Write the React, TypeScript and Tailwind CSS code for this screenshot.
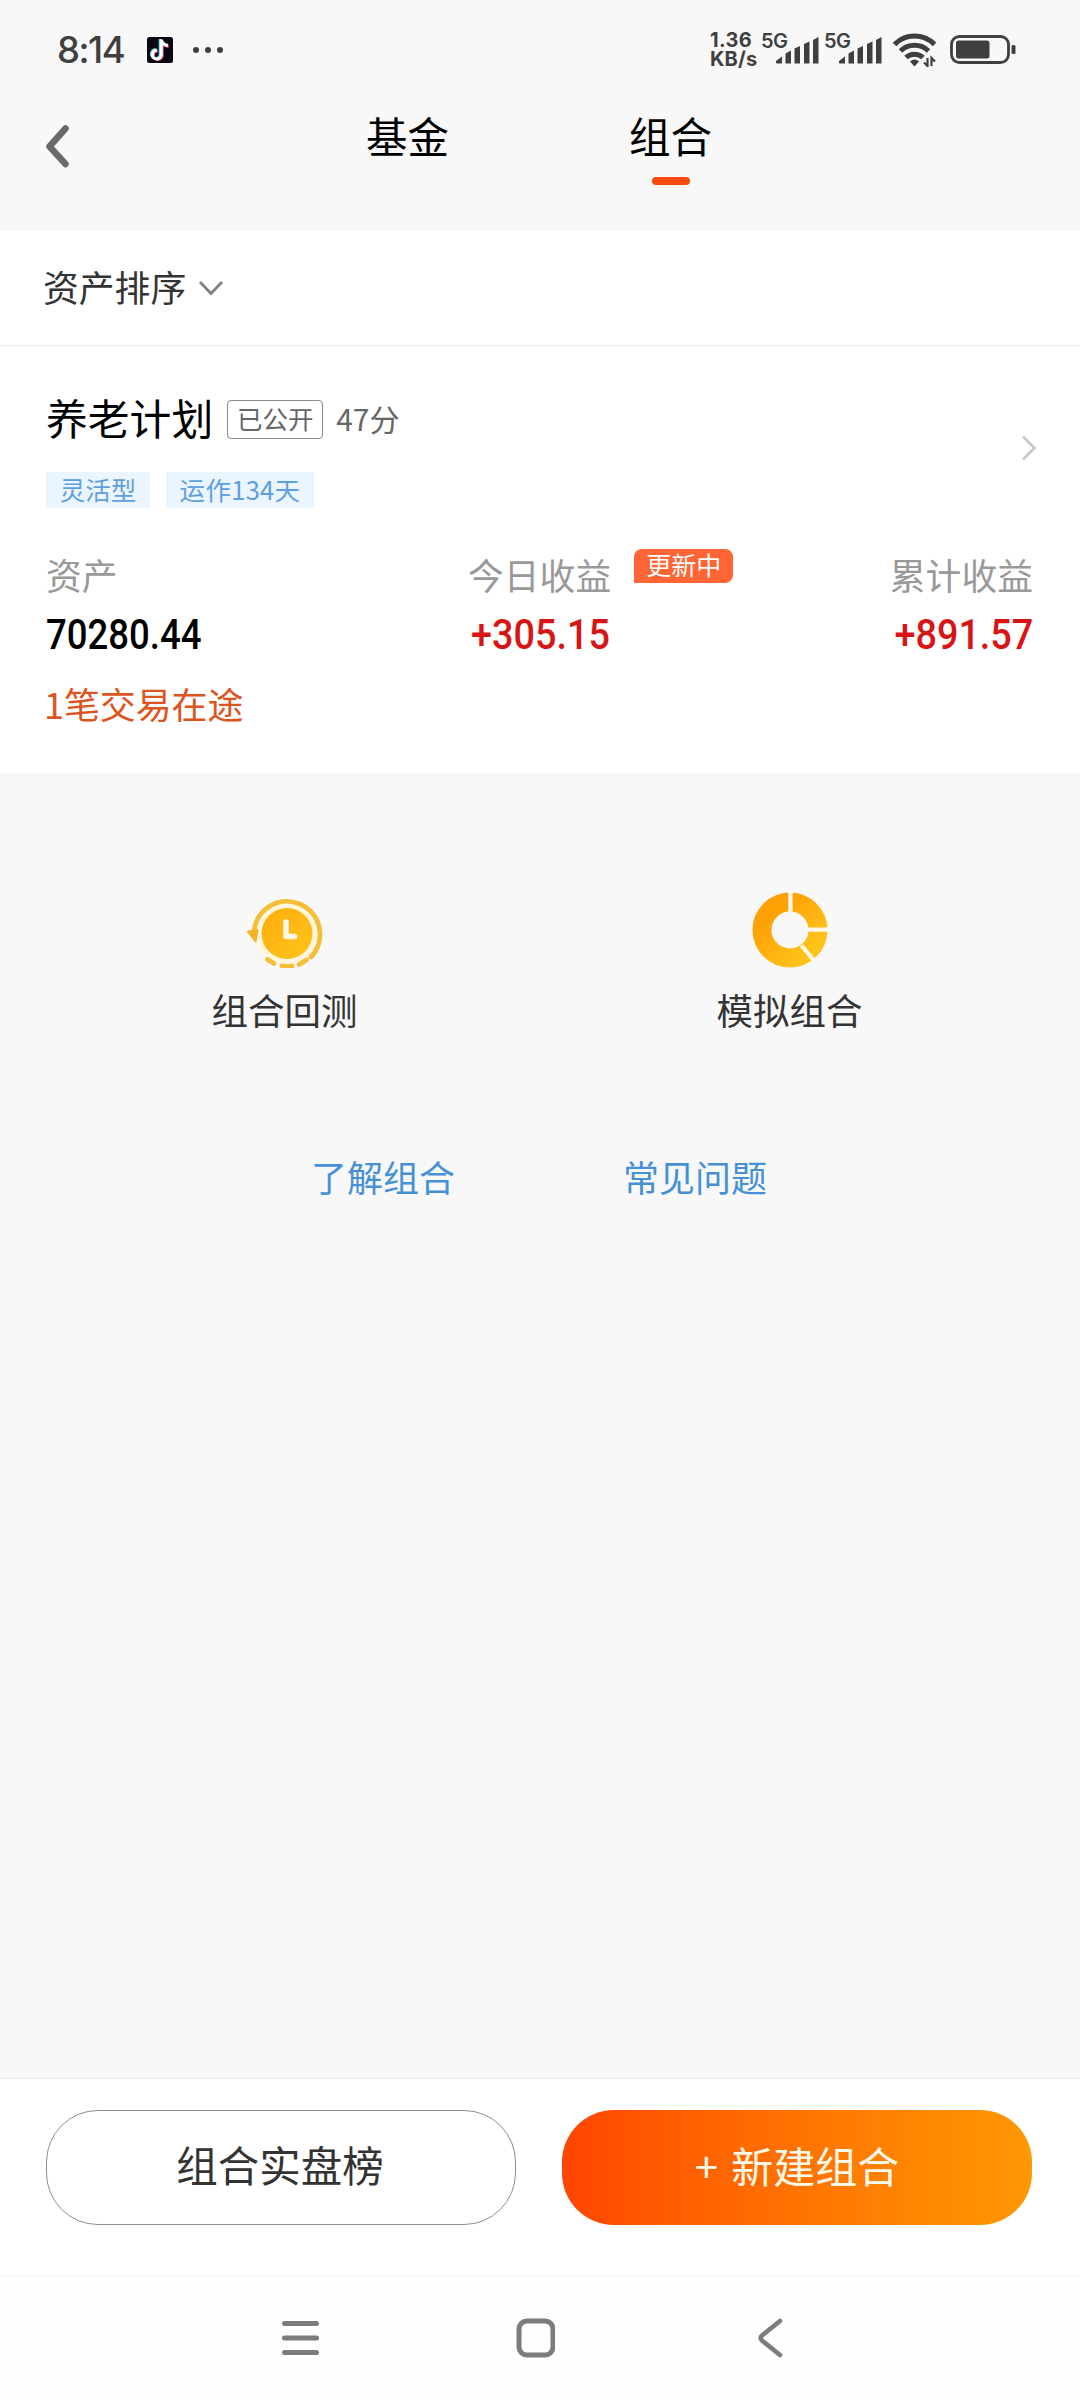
import clsx from 'clsx'

const cjk = "font-['Noto_Sans_CJK_SC',sans-serif]"

function SignalBars() {
  return (
    <svg className="-ml-[11px] mt-[7px] h-[27px] w-[43px]" viewBox="0 0 43 27" fill="#3f3f3f">
      <path d="M1 26.5a1 1 0 0 1-1-1V24l6-4.500v7z" />
      <path d="M9.500 16.500l5.500-3v13h-5.500z" />
      <path d="M18.500 11.500l5.500-2.500v17.500h-5.500z" />
      <path d="M28 7l5.500-2.500v22H28z" />
      <path d="M37 3l5.500-3v26.500H37z" />
    </svg>
  )
}

function StatusBar() {
  return (
    <div className="flex h-[100px] items-start pl-[57px] font-['Inter',sans-serif] text-[#3f3f3f]">
      <span className="mt-[30px] w-[90px] text-[36.500px] leading-[40px] font-medium tracking-[-1.5px]">8:14</span>
      <svg className="mt-[37px] h-[26px] w-[26px]" viewBox="0 0 26 26">
        <rect width="26" height="26" rx="2.5" fill="#0b0712" />
        <g fill="none" strokeWidth="3">
          <path d="M13.200 2v15a4.400 4.400 0 1 1-4.400-4.400M13.200 3c.5 3 2.800 5 6.500 5.200" stroke="#5fe3e6" />
          <path d="M15.200 3.500v14.700a4.400 4.400 0 1 1-4.400-4.400M15.200 4c.5 3 3 5 6.500 5.400" stroke="#e8476b" />
          <path d="M14.300 2.500v15.200a4.400 4.400 0 1 1-4.400-4.400M14.300 3c.5 3 3 5 6.700 5.400" stroke="#fff" />
        </g>
      </svg>
      <div className="mt-[47px] ml-5 flex gap-1.5">
        <i className="size-1.5 rounded-full bg-[#3f3f3f]" />
        <i className="size-1.5 rounded-full bg-[#3f3f3f]" />
        <i className="size-1.5 rounded-full bg-[#3f3f3f]" />
      </div>
      <div className="mt-[31px] ml-[487px] w-[51px] text-[20px] leading-[18.500px] font-bold">
        <div className="tracking-[0.3px]">1.36</div>
        <div className="tracking-[0.2px]">KB/s</div>
      </div>
      <span className="mt-[31px] w-[26px] text-[20px] leading-5 font-semibold tracking-[-0.5px]">5G</span>
      <span className="mt-[30px]"><SignalBars /></span>
      <span className="mt-[31px] ml-[5px] w-[26px] text-[20px] leading-5 font-semibold tracking-[-0.5px]">5G</span>
      <span className="mt-[30px]"><SignalBars /></span>
      <svg className="mt-[33px] ml-[11px] h-[34px] w-[44px]" viewBox="0 0 44 34">
        <g fill="none" stroke="#3f3f3f" strokeWidth="5">
          <path d="M1.500 11.500a28 28 0 0 1 40 0" />
          <path d="M7.500 18a20 20 0 0 1 28 0" />
          <path d="M13 24.500a12.500 12.500 0 0 1 17 0" />
        </g>
        <path d="M17 28.500q4.500-4 9 0l-4.500 5z" fill="#3f3f3f" />
        <path d="M34.500 25v8l-3.500-3.500M38.500 33v-8l3.500 3.500" fill="none" stroke="#3f3f3f" strokeWidth="2.200" />
      </svg>
      <svg className="mt-[35px] ml-[13px] h-[29px] w-[66px]" viewBox="0 0 66 29">
        <rect x="1.500" y="1.500" width="57" height="26" rx="8" fill="none" stroke="#3f3f3f" strokeWidth="2.800" />
        <rect x="6" y="5.500" width="33.500" height="18" rx="2.500" fill="#3f3f3f" />
        <rect x="61.500" y="10" width="4" height="9" rx="1.500" fill="#3f3f3f" />
      </svg>
    </div>
  )
}

function Header() {
  return (
    <div className="flex h-[131px] items-start text-[41.500px] leading-[42px] text-black">
      <svg className="mt-[24px] ml-[44px] h-[45px] w-[26px]" viewBox="0 0 26 45" fill="none" stroke="#6a6a6a" strokeWidth="6.500" strokeLinecap="round" strokeLinejoin="round">
        <path d="M21.500 4.500L5.500 22.500l16 17.500" />
      </svg>
      <div className="mt-[14px] ml-[296px]">基金</div>
      <div className="mt-[14px] ml-[180px] flex flex-col items-center">
        组合
        <div className="mt-[21px] h-[8px] w-[38px] rounded-full bg-[#f54a0a]" />
      </div>
    </div>
  )
}

function PlanCard() {
  const stats = [
    { label: '资产', value: '70280.44', box: 'w-[422px]', color: 'text-black', fit: 'origin-left scale-x-[0.87]' },
    {
      label: '今日收益',
      value: '+305.15',
      box: 'w-[422px]',
      color: 'text-[#d81414]',
      fit: 'origin-left ml-[3px] scale-x-[0.9]',
      badge: '更新中',
    },
    { label: '累计收益', value: '+891.57', box: 'w-[143px] items-end', color: 'text-[#d81414]', fit: 'origin-right scale-x-[0.9]' },
  ]

  return (
    <div className="h-[427px] bg-white pt-[54px] pl-[46px]">
      <div className="flex items-center justify-between pr-[43px]">
        <div>
          <div className="flex h-[39px] items-center">
            <span className="-mt-[5px] text-[41.800px] leading-[42px] text-black">养老计划</span>
            <span className="ml-[14px] flex h-[39px] w-[96px] items-center justify-center rounded-[4px] border border-[#8a8a8a] pb-[3px] text-[25.500px] leading-none text-[#666]">
              已公开
            </span>
            <span className="-mt-[4px] ml-[13px] text-[30px] leading-[30px] text-[#666]">47分</span>
          </div>
          <div className="mt-[33px] flex gap-4 text-[25.500px] leading-[33px] text-[#5f9fe0]">
            <span className="h-[36px] w-[104px] bg-[#ebf5ff] text-center">灵活型</span>
            <span className="h-[36px] w-[148px] bg-[#ebf5ff] text-center tracking-[0.3px]">运作134天</span>
          </div>
        </div>
        <svg className="-mt-3 h-[26px] w-[16px]" viewBox="0 0 16 26" fill="none" stroke="#c8c8c8" strokeWidth="2.600">
          <path d="M2 1.500l11.500 11.500L2 24.500" />
        </svg>
      </div>

      <div className="mt-[48px] flex">
        {stats.map((stat) => (
          <div key={stat.label} className={clsx('flex flex-col', stat.box)}>
            <div className="flex h-[36px] items-start text-[35.800px] leading-[36px] whitespace-nowrap text-[#999]">
              {stat.label}
              {stat.badge && (
                <span className="-mt-[7px] ml-[23px] h-[34px] w-[99px] rounded-[8px] rounded-bl-none bg-[#ff6535] text-center text-[25px] leading-[31px] text-white">
                  {stat.badge}
                </span>
              )}
            </div>
            <div
              className={clsx(
                "mt-[22px] w-max font-['Roboto',sans-serif] text-[42px] leading-[42px] font-medium",
                stat.color,
                stat.fit,
              )}
            >
              {stat.value}
            </div>
          </div>
        ))}
      </div>
      <div className="mt-[29px] -ml-[2px] text-[36px] leading-[36px] tracking-[-0.100px] text-[#dc5420]">1笔交易在途</div>
    </div>
  )
}

function BacktestIcon() {
  return (
    <svg className="h-[76px] w-[76px]" viewBox="0 0 76 76">
      <defs>
        <linearGradient id="clock" x1="0" y1="0" x2="1" y2="1">
          <stop offset="0" stopColor="#ffac0c" />
          <stop offset="1" stopColor="#ffc41c" />
        </linearGradient>
      </defs>
      <circle cx="40" cy="41.500" r="32" fill="#fff6dc" />
      <circle cx="40" cy="41.500" r="25.500" fill="url(#clock)" />
      <path d="M39 30v14.500h8.500" fill="none" stroke="#fff8e4" strokeWidth="5.500" strokeLinecap="round" strokeLinejoin="round" />
      <g fill="none" stroke="#f5bd38" strokeWidth="4.800" strokeLinecap="round">
        <path d="M7 41A33 33 0 1 1 64 65" />
        <path d="M20.500 67.500l6.500 4" />
        <path d="M35 74q5 .8 10 0" />
        <path d="M52 72.500l7.500-4.500" />
      </g>
      <path d="M1 39.500l9.500-1.500-2 11.500z" fill="#f5b32a" stroke="#f5b32a" strokeWidth="2" strokeLinejoin="round" />
    </svg>
  )
}

function DonutIcon() {
  return (
    <svg className="h-[76px] w-[76px]" viewBox="0 0 76 76">
      <defs>
        <linearGradient id="donut" x1="0.200" y1="0.200" x2="0.900" y2="0.900">
          <stop offset="0" stopColor="#ffa104" />
          <stop offset="1" stopColor="#ffc41c" />
        </linearGradient>
      </defs>
      <circle cx="38" cy="38" r="28" fill="none" stroke="url(#donut)" strokeWidth="19" />
      <path d="M38.500 20V0M56 37.700h20M49.500 53.500l12.500 15" stroke="#fff8e8" strokeWidth="4.200" />
    </svg>
  )
}

function Tools() {
  return (
    <div className="flex px-[32px] pt-[119px] text-[36.500px] leading-[36px] text-[#333]">
      <div className="flex w-[505px] flex-col items-center gap-[24px]">
        <BacktestIcon />
        组合回测
      </div>
      <div className="flex w-[505px] flex-col items-center gap-[24px]">
        <DonutIcon />
        模拟组合
      </div>
    </div>
  )
}

function SystemNav() {
  return (
    <div className="flex h-[125px] items-start border-t border-[#f6f6f6] bg-[#fefefe] pt-[42px] pl-[282px]">
      <svg className="h-[40px] w-[37px]" viewBox="0 0 37 40" fill="none" stroke="#7c7c7c" strokeWidth="5" strokeLinecap="round">
        <path d="M2.500 5.500h32M2.500 20h32M2.500 34.500h32" />
      </svg>
      <svg className="ml-[196px] h-[40px] w-[40px]" viewBox="0 0 40 40" fill="none" stroke="#7c7c7c" strokeWidth="5">
        <rect x="4" y="3" width="34" height="34" rx="8" />
      </svg>
      <svg className="ml-[202px] h-[40px] w-[26px]" viewBox="0 0 26 40" fill="none" stroke="#7c7c7c" strokeWidth="4.600" strokeLinecap="round" strokeLinejoin="round">
        <path d="M23 3L5 17.500q-2.800 2.500 0 5L23 37" />
      </svg>
    </div>
  )
}

export default function App() {
  return (
    <div className={clsx('flex h-[2400px] w-[1080px] flex-col overflow-hidden bg-[#f8f8f8]', cjk)}>
      <StatusBar />
      <Header />
      <div className="flex h-[115px] items-center border-b border-[#ebebeb] bg-white pb-[4px] pl-[43px] text-[35.800px] leading-[36px] text-[#333]">
        资产排序
        <svg className="mt-[4px] ml-[12px] h-[16px] w-[26px]" viewBox="0 0 26 16" fill="none" stroke="#808080" strokeWidth="2.800">
          <path d="M2 2L13 13.500 24 2" />
        </svg>
      </div>
      <PlanCard />
      <Tools />
      <div className="mt-[130px] flex flex-1 gap-[168px] pl-[311px] text-[36px] leading-[36px] text-[#4690d6]">
        <span>了解组合</span>
        <span>常见问题</span>
      </div>
      <div className="flex h-[197px] gap-[46px] border-t border-[#e9e9e9] bg-white pt-[31px] pl-[46px] text-[41.500px] leading-none">
        <button className="h-[115px] w-[470px] rounded-[52px] border border-[#8e8e8e] pr-[2px] pb-[6px] text-[#333]">组合实盘榜</button>
        <button className="h-[115px] w-[470px] rounded-[52px] bg-linear-to-r from-[#ff4400] to-[#ff9803] pb-[6px] text-[42px] [word-spacing:4px] text-[#fff9ea]">
          + 新建组合
        </button>
      </div>
      <SystemNav />
    </div>
  )
}
